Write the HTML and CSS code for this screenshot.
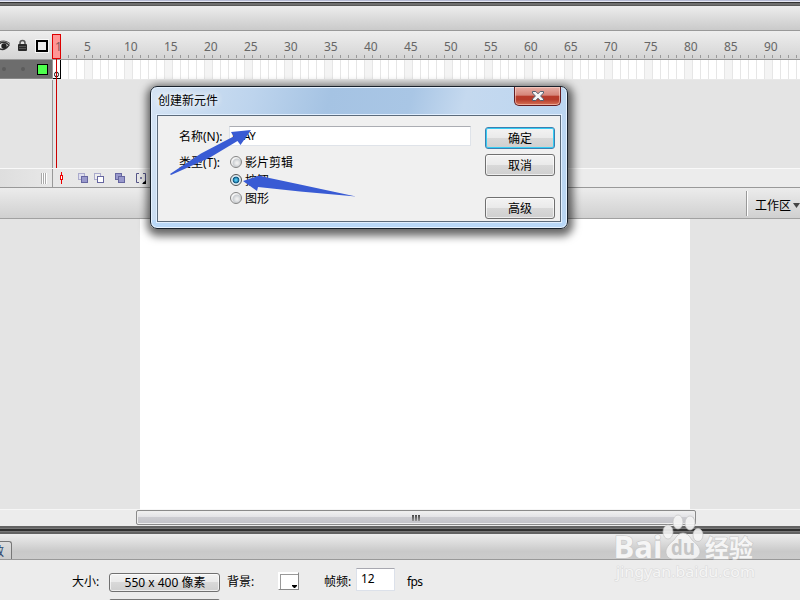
FILE: index.html
```html
<!DOCTYPE html>
<html lang="zh-CN">
<head>
<meta charset="utf-8">
<title>创建新元件</title>
<link rel="stylesheet" href="styles.css">
</head>
<body>
<main class="app">
  <div class="top-edge"></div>
  <div class="title-strip"></div>
  <section class="timeline">
    <div class="ruler-row">
      <div class="layer-head">
        <svg width="53" height="28" viewBox="0 0 53 28">
          <path d="M-3 15Q3 8 9 14Q4 21-2 17Z" fill="#eee" stroke="#333" stroke-width="1.4"/><circle cx="4" cy="15" r="2.700" fill="#222"/><path d="M-2 11.500Q4 8 10 12.500" fill="none" stroke="#555"/>
          <path d="M20 14v-2a2.500 2.500 0 0 1 5 0v2" fill="none" stroke="#555" stroke-width="1.500"/><rect x="18" y="13" width="9" height="7" rx="1" fill="#292929"/><path d="M19 15.500h7M19 17.500h7" stroke="#555"/>
          <rect x="35" y="8" width="14" height="14" fill="#f8f8f8"/><rect x="37" y="10" width="10" height="10" fill="#eee" stroke="#000" stroke-width="2"/>
        </svg>
      </div>
      <div class="ruler">
        <span>5</span><span>10</span><span>15</span><span>20</span><span>25</span><span>30</span><span>35</span><span>40</span><span>45</span><span>50</span><span>55</span><span>60</span><span>65</span><span>70</span><span>75</span><span>80</span><span>85</span><span>90</span>
      </div>
    </div>
    <div class="frames-row">
      <div class="layer"><i></i><i></i><b></b></div>
      <div class="frames"><div class="keyframe"><svg width="7" height="18" viewBox="0 0 7 18"><ellipse cx="3.500" cy="14.500" rx="2" ry="2.500" fill="#fff" stroke="#111"/></svg></div></div>
    </div>
    <div class="timeline-empty"></div>
    <div class="playhead"><span>1</span></div>
  </section>
  <div class="timeline-status">
    <svg width="160" height="18" viewBox="0 0 160 18">
      <path d="M41.500 4v11M43.500 4v11M45.500 4v11" stroke="#aaa"/><path d="M42.500 4v11M44.500 4v11M46.500 4v11" stroke="#fff"/>
      <path d="M52.500 0v18" stroke="#999"/>
      <path d="M61.500 3v12" stroke="#e00"/><rect x="60.500" y="6.500" width="2" height="4" fill="#fff" stroke="#e00"/>
      <g stroke="#6666a0"><rect x="78.500" y="4.500" width="6" height="6" fill="#dedeee" stroke="#aaaacc"/><rect x="81.500" y="7.500" width="6" height="6" fill="#9999cc"/><rect x="94.500" y="4.500" width="6" height="6" fill="#eee" stroke="#aaaacc"/><rect x="97.500" y="7.500" width="6" height="6" fill="#fff"/><rect x="115.500" y="4.500" width="6" height="6" fill="#9999cc"/><rect x="118.500" y="7.500" width="6" height="6" fill="#9999cc"/></g>
      <path d="M139 4.500h-2.500v9H139M143 4.500h2.500v9H143" fill="none" stroke="#555588"/><circle cx="141" cy="9" r="1" fill="#555588"/><path d="M146 11v4h-4z" fill="#000"/>
    </svg>
  </div>
  <div class="edit-bar"><div class="workspace">工作区<svg width="8" height="6" viewBox="0 0 8 6"><path d="M0 0h7L3.500 5z" fill="#444"/></svg></div></div>
  <section class="stage-area"><div class="stage"></div></section>
  <div class="scroll-row"><div class="scroll-thumb"><i></i><i></i><i></i></div></div>
  <div class="divider"></div>
  <div class="tab-strip"><div class="tab">效</div></div>
  <section class="properties">
    <label class="size-label">大小:</label>
    <div class="size-col"><button class="size-btn">550 x 400 像素</button><div class="next-btn"></div></div>
    <label class="bg-label">背景:</label>
    <div class="swatch"><svg width="21" height="18" viewBox="0 0 21 18"><path d="M14 13h5v1l-2 2h-1l-2-2z" fill="#000"/></svg></div>
    <label class="rate-label">帧频:</label>
    <div class="rate-field">12</div>
    <span class="fps">fps</span>
  </section>
</main>

<section class="dialog">
  <header><h1>创建新元件</h1><div class="close"><svg width="12" height="10" viewBox="0 0 12 10"><path d="M.5.5h3.300L6 2.800 8.200.5h3.300v1.500L8.600 5l2.900 3v1.500H8.200L6 7.200 3.800 9.500H.5V8l2.900-3L.5 2z" fill="#f4f4f4" stroke="#536070"/></svg></div></header>
  <div class="dialog-body">
    <div class="form">
      <div class="name-row"><label>名称(N):</label><div class="name-field">PLAY</div></div>
      <div class="type-row"><label>类型(T):</label>
        <div class="options"><div><i class="radio"></i><span>影片剪辑</span></div><div><i class="radio on"></i><span>按钮</span></div><div><i class="radio"></i><span>图形</span></div></div>
      </div>
    </div>
    <div class="buttons"><button class="primary">确定</button><button>取消</button><button class="advanced">高级</button></div>
  </div>
</section>

<svg class="arrows" width="200" height="90" viewBox="160 120 200 90">
  <g fill="#395bd4"><path d="M170 174L201 153.500L233.500 136.500L231 132L251 130L240.500 145L237.500 141L210 157.500L171 175Z"/><path d="M243 181L259.500 175.500L267 177.500L300 184.500L356 196.500L300 191.500L258 187L257 191Z"/></g>
</svg>

<div class="watermark">
  <svg width="150" height="70" viewBox="610 512 150 70">
    <g fill="#f5f5f5" fill-opacity=".9" stroke="#c3c3c3" stroke-width=".7"><ellipse cx="668" cy="532" rx="5" ry="7"/><ellipse cx="678" cy="522" rx="5" ry="7"/><ellipse cx="690" cy="523" rx="5" ry="7"/><ellipse cx="698" cy="535" rx="5" ry="6.500"/><path d="M683 533Q688 533 692 540Q701 547 700 553Q698 560 689 559H676Q667 560 666 553Q665 547 674 540Q678 533 683 533Z"/></g>
    <text class="mark bai" x="613.500" y="558" font-size="31" textLength="49" lengthAdjust="spacingAndGlyphs">Bai</text>
    <text class="du" x="671" y="555" font-size="21" textLength="24" lengthAdjust="spacingAndGlyphs">du</text>
    <text class="mark cjk" x="705" y="557" font-size="24" textLength="48" lengthAdjust="spacingAndGlyphs">经验</text>
    <text class="mark url" x="616" y="577" font-size="15" textLength="139" lengthAdjust="spacingAndGlyphs">jingyan.baidu.com</text>
  </svg>
</div>
</body>
</html>
```
FILE: styles.css
```css
* { box-sizing: border-box; }
body { margin: 0; width: 800px; height: 600px; overflow: hidden; position: relative; background: #ececec; color: #000; font: 12px/18px "Noto Sans", "Noto Sans CJK SC", sans-serif; }
svg { display: block; }
i { font-style: normal; }
button { margin: 0; padding: 0; color: #000; font: inherit; line-height: 18px; border: 1px solid #707070; border-radius: 3px; background: linear-gradient(#f3f3f3, #eaeaea 48%, #d9d9d9 50%, #cfcfcf); box-shadow: inset 0 0 0 1px rgba(255, 255, 255, .65); }
.app { display: flex; flex-direction: column; height: 600px; }
.app > * { flex: none; }
.top-edge { height: 6px; background: linear-gradient(#b5bad4 0 1px, #e9eaf4 1px 2px, #333 2px 3px, #707070 3px 5px, #5b5b5b 5px); }
.title-strip { height: 25px; background: linear-gradient(#ededed, #cacaca); border-bottom: 1px solid #999; }
.timeline { position: relative; height: 137px; display: flex; flex-direction: column; }
.ruler-row { height: 29px; display: flex; border-bottom: 1px solid #999; background: linear-gradient(#eee, #d4d4d4); }
.layer-head { width: 53px; }
.ruler { flex: 1; display: flex; padding-left: 31px; overflow: hidden; background: repeating-linear-gradient(90deg, #999 0 1px, transparent 1px 8px) 15px 24px / 100% 3px no-repeat; }
.ruler span { flex: 0 0 40px; color: #666; line-height: 31px; }
.frames-row { height: 20px; display: flex; border-bottom: 1px solid #e8e8e8; }
.layer { width: 53px; background: #6d6d6d; display: flex; align-items: center; gap: 15px; border-right: 1px solid #999; padding-left: 2px; border-bottom: 1px solid #888; }
.layer i { width: 4px; height: 4px; border-radius: 50%; background: #5c5c5c; }
.layer i + i { margin-right: -3px; }
.layer b { width: 11px; height: 11px; background: #4dff4d; border: 1px solid #000; }
.frames { flex: 1; background: linear-gradient(90deg, #e6e6e6 1px, transparent 1px) 7px 0 / 8px 100%, linear-gradient(90deg, #f4f4f4 8px, #fff 8px) 31px 0 / 40px 100%; }
.keyframe { width: 8px; height: 19px; border-right: 1px solid #000; border-bottom: 1px solid #000; background: #fff; }
.timeline-empty { flex: 1; background: linear-gradient(90deg, #e4e4e4 52px, #999 52px 53px, #e4e4e4 53px); }
.playhead { position: absolute; left: 52px; top: 3px; width: 9px; height: 134px; background: linear-gradient(90deg, transparent 4px, #cc0000 4px 5px, transparent 5px); }
.playhead span { display: block; width: 9px; height: 25px; border: 1px solid #d00; background: #ff9696; color: #85565a; line-height: 24px; padding-left: 2px; }
.timeline-status { height: 20px; border-top: 1px solid #f9f9f9; border-bottom: 1px solid #999; background: linear-gradient(90deg, #dedede, #e7e7e7 50px, #ececec 400px); }
.edit-bar { height: 31px; display: flex; justify-content: flex-end; border-bottom: 1px solid #a1a1a1; background: linear-gradient(#ececec, #d0d0d0); padding: 3px 0 2px; }
.workspace { width: 54px; border-left: 1px solid #999; box-shadow: inset 1px 0 #fff; padding-left: 8px; display: flex; align-items: center; line-height: 20px; padding-top: 4px; white-space: nowrap; }
.workspace svg { margin-left: 2px; flex: none; }
.stage-area { height: 290px; padding: 0 110px 0 140px; background: #e4e4e4; }
.stage { height: 290px; background: #fff; }
.scroll-row { height: 17px; padding: 0 104px 1px 136px; background: #ececec; border-top: 1px solid #f6f6f6; }
.scroll-thumb { height: 15px; display: flex; gap: 1px; justify-content: center; align-items: center; border: 1px solid #8a8a8a; border-radius: 2px; background: linear-gradient(#f1f1f1, #e3e3e6 45%, #ccccd1 50%, #c3c3c8); box-shadow: inset 0 0 0 1px #eee; }
.scroll-thumb i { width: 2px; height: 6px; background: linear-gradient(#444, #999); }
.divider { height: 8px; background: linear-gradient(#636363 0 2px, #777 2px 3px, #303030 3px 5px, #777 5px 6px, #626262 6px); }
.tab-strip { height: 26px; display: flex; align-items: flex-end; border-bottom: 1px solid #999; background: linear-gradient(#ededed, #c9c9c9 70%, #ccc); }
.tab { width: 12px; height: 18px; overflow: hidden; border: 1px solid #777; border-left: 0; border-bottom: 0; border-radius: 0 3px 0 0; background: linear-gradient(#ddd, #ccc); text-indent: -8px; line-height: 19px; color: #26436d; }
.properties { height: 40px; display: flex; overflow: hidden; padding-left: 72px; background: #ececec; white-space: nowrap; }
.properties label, .fps { line-height: 44px; }
.size-label { width: 37px; }
.size-col { width: 111px; padding-top: 13px; }
.size-btn { display: block; width: 111px; height: 19px; padding-left: 1px; }
.next-btn { height: 10px; margin-top: 7px; border: 1px solid #777; border-radius: 2px; }
.bg-label { margin-left: 7px; width: 51px; }
.swatch { width: 21px; height: 18px; margin-top: 12px; background: #fff; border: 1px solid #999; border-color: #fff #888 #888 #fff; box-shadow: inset 1px 1px #fff, inset 2px 2px #999; }
.swatch svg { margin: -1px; }
.rate-label { width: 32px; margin-left: 25px; }
.rate-field { width: 39px; height: 23px; margin-top: 8px; padding-left: 4px; line-height: 19px; background: #fff; border: 1px solid #dce1ea; border-top-color: #a8a8b0; }
.fps { margin-left: 12px; letter-spacing: -.6px; }
.dialog { position: absolute; left: 150px; top: 86px; width: 418px; height: 143px; padding: 0 6px 7px; border: 1px solid #18212b; border-radius: 7px; background: linear-gradient(#b9d8f8, #b9d8f8) 0 100% / 100% 8px no-repeat, linear-gradient(105deg, #d5e4f4, #bdd4ed 23%, #a5c3e3 40%, #a9c6e5 58%, #c5d9ef 70%, #b9d5f1); box-shadow: inset 0 0 0 1px #e6f2ff, 1px 3px 9px 4px rgba(0, 0, 0, .6); }
.dialog header { height: 28px; display: flex; justify-content: space-between; }
.dialog h1 { margin: 0 0 0 1px; font-size: 12px; font-weight: 400; line-height: 28px; text-shadow: 0 0 7px #fff, 0 0 9px #fff; }
.close { width: 47px; height: 19px; display: grid; place-items: center; border: 1px solid #641d22; border-top: 0; border-radius: 0 0 5px 5px; background: linear-gradient(#e7aea5, #d58579 46%, #b83b2b 50%, #b63c2b 70%, #d77357); box-shadow: inset 0 0 0 1px rgba(255, 220, 210, .55); }
.dialog-body { height: 107px; display: flex; justify-content: space-between; border: 1px solid #5c6b7b; background: #f0f0f0; padding: 10px 5px 0 21px; box-shadow: 0 0 0 1px #e1efff; }
.form { width: 292px; }
.name-row { display: flex; height: 21px; }
.name-row label, .type-row label { width: 50px; line-height: 22px; white-space: nowrap; }
.name-field { width: 242px; height: 20px; padding-left: 2px; font-size: 11px; letter-spacing: -.4px; line-height: 18px; background: #fff; border: 1px solid #dfe3e9; border-top-color: #abadb3; }
.type-row { display: flex; margin-top: 6px; }
.type-row label { line-height: 20px; }
.options > div { height: 18px; display: flex; align-items: center; gap: 3px; padding-left: 1px; }
.options span { line-height: 18px; padding-top: 1px; }
.radio { width: 12px; height: 12px; border: 1px solid #858585; border-radius: 50%; background: radial-gradient(circle at 60% 60%, #eee 0 1px, #c9cdd1 4px, #f5f5f5 5px); }
.radio.on { border-color: #555; background: radial-gradient(circle, #52c4ed 0 1px, #08517c 3px, #dceaf1 3.700px); }
.buttons { width: 70px; padding-top: 1px; }
.buttons button { display: block; width: 70px; height: 22px; margin-bottom: 5px; padding-top: 1px; line-height: 19px; }
.buttons .advanced { margin-top: 21px; }
.buttons .primary { border-color: #3c7fb1; box-shadow: inset 0 0 0 1px #36cdf4; }
.arrows { position: absolute; left: 160px; top: 120px; }
.watermark { position: absolute; left: 610px; top: 512px; }
.mark { fill: #f5f5f5; stroke: #c8c8c8; stroke-width: 1.200px; paint-order: stroke; }
.bai { font-family: "Open Sans", sans-serif; font-weight: 700; }
.du { font-family: "Open Sans", sans-serif; font-weight: 700; fill: #c6c6c6; }
.cjk { font-family: "Noto Sans CJK SC", sans-serif; font-weight: 700; }
.url { font-family: "Noto Sans", sans-serif; stroke: #dcdcdc; }
```
